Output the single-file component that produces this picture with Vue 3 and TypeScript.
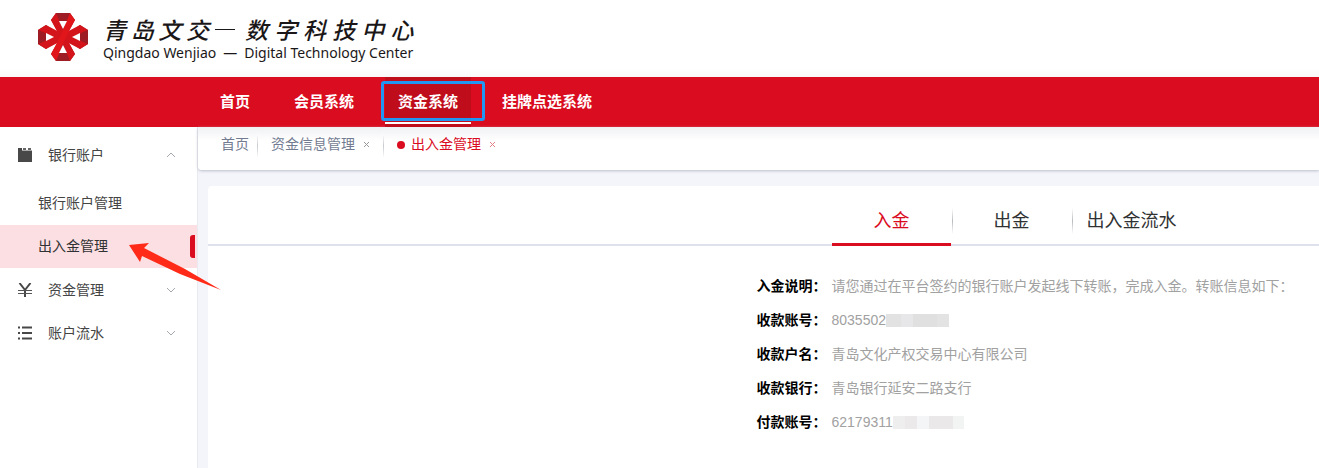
<script setup lang="ts">
import { ref } from 'vue'

const brandLeft = ['青', '岛', '文', '交']
const brandRight = ['数', '字', '科', '技', '中', '心']
const systems = ['首页', '会员系统', '资金系统', '挂牌点选系统']
const activeSystem = ref('资金系统')
const tabs = ['入金', '出金', '出入金流水']
const activeTab = ref('入金')
const accountOpen = ref(true)
const details = [
  { label: '入金说明：', value: '请您通过在平台签约的银行账户发起线下转账，完成入金。转账信息如下：' },
  { label: '收款账号：', value: '8035502', mask: 'mask-a' },
  { label: '收款户名：', value: '青岛文化产权交易中心有限公司' },
  { label: '收款银行：', value: '青岛银行延安二路支行' },
  { label: '付款账号：', value: '62179311', mask: 'mask-b' },
]
</script>

<template>
  <div class="page">
    <header class="brand">
      <svg class="logo" viewBox="0 0 52 50" aria-hidden="true">
        <path d="M19 1H33L38 8L30 22H22L14 8ZM19 49H33L38 42L30 28H22L14 42Z" fill="#9e1c23" />
        <path d="M1 18L9 13L22 22V28L9 37L1 32ZM51 18L43 13L30 22V28L43 37L51 32Z" fill="#9e1c23" />
        <g fill="#d3151b">
          <path d="M19 1L14 8L23 25L33 49L38 42L29 25Z" />
          <path d="M1 18L9 13L26 22L43 13L51 18L36 25L51 32L43 37L26 28L9 37L1 32L16 25Z" />
        </g>
        <path d="M33 1L38 8L29 25L19 49L14 42L23 25Z" fill="#e0161b" />
        <path d="M1 18V32L8 29V21ZM51 18V32L44 29V21Z" fill="#9e1c23" />
        <path d="M22 9H30L26 17ZM22 41H30L26 33ZM9 21V29L17 25ZM43 21V29L35 25Z" fill="#fff" />
      </svg>
      <div class="brand-text">
        <div class="brand-cn">
          <div class="chars left"><span v-for="c in brandLeft" :key="c">{{ c }}</span></div>
          <i class="dash"></i>
          <div class="chars right"><span v-for="c in brandRight" :key="c">{{ c }}</span></div>
        </div>
        <div class="brand-en"><span>Qingdao Wenjiao</span><span>—</span><span>Digital Technology Center</span></div>
      </div>
    </header>

    <nav class="systems">
      <button v-for="s in systems" :key="s" type="button" :class="{ active: s === activeSystem }" @click="activeSystem = s">{{ s }}</button>
    </nav>

    <div class="body">
      <aside class="side">
        <button class="group first" type="button" :aria-expanded="accountOpen" @click="accountOpen = !accountOpen">
          <svg class="gi" viewBox="0 0 14 14" aria-hidden="true"><path d="M0 0H4V3H14V14H0Z" fill="#484848" /><path d="M4 2H14V3H4Z" fill="#aaa" /><path d="M5 0H8V2H5ZM10 0H13V2H10Z" fill="#666" /></svg>
          <span>银行账户</span>
          <svg class="chev" viewBox="0 0 10 6" aria-hidden="true"><path d="M1 5L5 1L9 5" /></svg>
        </button>
        <template v-if="accountOpen">
          <a class="item" href="#accounts">银行账户管理</a>
          <a class="item current" href="#transfer">出入金管理
            <svg class="arrow" viewBox="0 0 94 48" aria-hidden="true"><path d="M1 2L21 0L16 5L57 26L93 47L52 31L14 13L12 19Z" fill="#ff2a17" /></svg>
          </a>
        </template>
        <button class="group" type="button">
          <svg class="gi" viewBox="0 0 14 14" aria-hidden="true"><path d="M1.5 0L7 7L12.5 0M7 7V14" fill="none" stroke="#484848" stroke-width="2" /><path d="M0 7.5H14M0 10.5H14" stroke="#555" /></svg>
          <span>资金管理</span>
          <svg class="chev" viewBox="0 0 10 6" aria-hidden="true"><path d="M1 1L5 5L9 1" /></svg>
        </button>
        <button class="group" type="button">
          <svg class="gi" viewBox="0 0 14 14" aria-hidden="true"><path d="M0 1.5H2M4 1.5H14M0 7H2M4 7H14M0 12.5H2M4 12.5H14" stroke="#484848" stroke-width="2" /></svg>
          <span>账户流水</span>
          <svg class="chev" viewBox="0 0 10 6" aria-hidden="true"><path d="M1 1L5 5L9 1" /></svg>
        </button>
      </aside>

      <main class="main">
        <div class="history">
          <a href="#home">首页</a>
          <i class="sep"></i>
          <a href="#info">资金信息管理</a>
          <button type="button" class="close" aria-label="关闭资金信息管理"><svg viewBox="0 0 5 5"><path d="M0 0L5 5M5 0L0 5" /></svg></button>
          <i class="sep second"></i>
          <i class="dot"></i>
          <a class="on" href="#transfer">出入金管理</a>
          <button type="button" class="close on" aria-label="关闭出入金管理"><svg viewBox="0 0 5 5"><path d="M0 0L5 5M5 0L0 5" /></svg></button>
        </div>

        <section class="panel">
          <div class="tabs" role="tablist">
            <button v-for="t in tabs" :key="t" type="button" role="tab" :aria-selected="t === activeTab" :class="{ active: t === activeTab }" @click="activeTab = t">{{ t }}</button>
          </div>
          <dl class="details">
            <div v-for="d in details" :key="d.label" class="row">
              <dt>{{ d.label }}</dt>
              <dd>{{ d.value }}<i v-if="d.mask" class="mask" :class="d.mask"></i></dd>
            </div>
          </dl>
        </section>
      </main>
    </div>
  </div>
</template>

<style>
body {
  margin: 0;
  background: #f4f5fa;
}
</style>

<style scoped>
.page {
  min-height: 100vh;
  display: flex;
  flex-direction: column;
  font-family: "Liberation Sans", "Noto Sans CJK SC", sans-serif;
  font-size: 14px;
  line-height: 20px;
  overflow: hidden;
}
button {
  border: 0;
  padding: 0;
  background: none;
  font: inherit;
  color: inherit;
  cursor: pointer;
}
a {
  color: inherit;
  text-decoration: none;
}
.brand {
  height: 77px;
  box-sizing: border-box;
  padding: 12px 37px;
  display: flex;
  gap: 14px;
  background: linear-gradient(#fff 68px, #f8f8f9);
}
.logo {
  width: 52px;
  height: 50px;
}
.brand-text {
  color: #1b1718;
}
.brand-cn {
  display: flex;
  align-items: center;
  height: 34px;
  font-family: "Noto Sans CJK SC", sans-serif;
  font-size: 23px;
  font-weight: 500;
  font-style: italic;
}
.chars {
  display: flex;
  justify-content: space-between;
}
.chars.left {
  width: 106px;
}
.chars.right {
  flex: 1;
}
.dash {
  width: 20px;
  height: 1px;
  margin: 0 10px 0 6px;
  background: #1b1718;
}
.brand-en {
  display: flex;
  gap: 7px;
  font-family: "Noto Sans", sans-serif;
  font-size: 14px;
  line-height: 14px;
}
.systems {
  height: 50px;
  padding-left: 207px;
  display: flex;
  gap: 18px;
  background: #da0c1f;
  color: #fff;
  font-size: 15px;
  font-weight: 700;
}
.systems button {
  padding: 0 13px;
  position: relative;
}
.systems .active {
  background: #bf0d1b;
}
.systems .active::before {
  content: "";
  position: absolute;
  inset: 4px -14px 6px -4px;
  border: 3px solid #2196f3;
  border-radius: 3px;
}
.systems .active::after {
  content: "";
  position: absolute;
  inset: auto 0 3px;
  height: 2px;
  background: #fff;
}
.body {
  flex: 1;
  display: flex;
}
.side {
  width: 197px;
  flex: none;
  background: #fff;
  border-right: 1px solid #e9eaf0;
  color: #444;
}
.group {
  width: 100%;
  height: 43px;
  padding: 0 21px 0 18px;
  display: flex;
  align-items: center;
  text-align: left;
}
.group.first {
  height: 55px;
}
.gi {
  width: 14px;
  height: 14px;
  margin-right: 16px;
}
.chev {
  width: 10px;
  height: 6px;
  margin-left: auto;
  fill: none;
  stroke: #a5a8ae;
}
.item {
  display: block;
  position: relative;
  height: 43px;
  padding-left: 38px;
  line-height: 43px;
}
.current {
  background: #fbdfe2;
  color: #303133;
}
.current::after {
  content: "";
  position: absolute;
  right: 2px;
  top: 10px;
  width: 5px;
  height: 23px;
  border-radius: 3px 0 0 3px;
  background: #da0c1f;
}
.arrow {
  position: absolute;
  z-index: 2;
  left: 128px;
  top: 18px;
  width: 94px;
  height: 48px;
}
.main {
  flex: 1;
  min-width: 0;
  display: flex;
  flex-direction: column;
}
.history {
  height: 43px;
  box-sizing: border-box;
  padding: 7px 23px 0;
  display: flex;
  align-items: flex-start;
  background: linear-gradient(#f0f1f4, #fff 14px);
  border-radius: 0 0 0 4px;
  box-shadow: 0 1px 3px #b9becb;
  color: #737b91;
}
.sep {
  width: 1px;
  height: 24px;
  margin: 0 13px 0 8px;
  background: linear-gradient(#fff, #c8cad0, #fff);
}
.sep.second {
  margin-left: 12px;
}
.close {
  width: 9px;
  height: 20px;
  margin-left: 7px;
  display: grid;
  place-items: center;
}
.close svg {
  width: 5px;
  height: 5px;
  stroke: #999;
}
.close.on svg {
  stroke: #e58189;
}
.dot {
  width: 8px;
  height: 8px;
  margin: 7px 6px 0 0;
  border-radius: 50%;
  background: #da0c1f;
}
.on {
  color: #da0c1f;
}
.panel {
  flex: 1;
  margin: 16px 0 0 10px;
  background: #fff;
  border-radius: 4px 0 0;
}
.tabs {
  height: 60px;
  box-sizing: border-box;
  padding-left: calc(50% + 68px);
  display: flex;
  border-bottom: 2px solid #dfe2ec;
}
.tabs button {
  position: relative;
  flex: none;
  width: 120px;
  padding-top: 12px;
  font-size: 18px;
  color: #303133;
}
.tabs button + button::before {
  content: "";
  position: absolute;
  left: 0;
  top: 22px;
  width: 1px;
  height: 26px;
  background: linear-gradient(#fff, #b9bbc0, #fff);
}
.tabs .active {
  color: #da0c1f;
}
.tabs .active::after {
  content: "";
  position: absolute;
  inset: auto 1px -2px 0;
  height: 3px;
  background: #da0c1f;
}
.details {
  margin: 23px 0 0 calc(50% - 7px);
}
.row {
  height: 34px;
  display: flex;
  align-items: center;
}
.row dt {
  flex: none;
  width: 75px;
  color: #000;
  font-weight: 700;
  white-space: nowrap;
}
.row dd {
  margin: 0;
  display: flex;
  align-items: center;
  color: #a1a1a1;
  white-space: nowrap;
}
.mask {
  height: 13px;
}
.mask-a {
  width: 63px;
  background: linear-gradient(90deg, #e2e2e2 15px, #e7e7ea 15px 27px, #e0e0e0 27px 51px, #e3e3e3 51px);
}
.mask-b {
  width: 71px;
  background: linear-gradient(90deg, #eee 12px, #ebe9e9 12px 24px, #f3f5f7 24px 36px, #eae8e8 36px 60px, #f2f3f3 60px);
}
</style>
